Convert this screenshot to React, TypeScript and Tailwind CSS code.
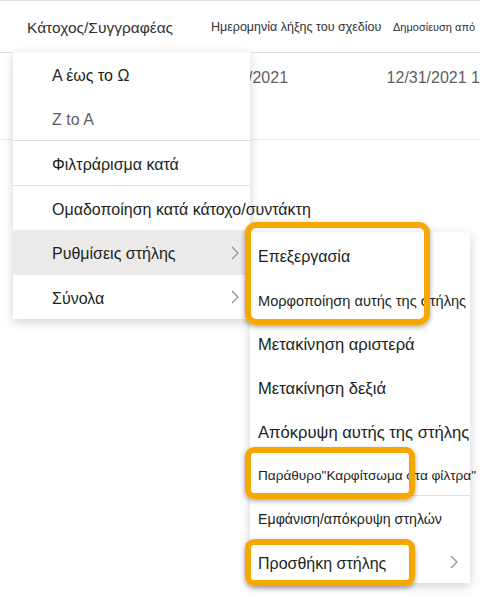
import React from 'react';

const Chevron = ({ className = '' }: { className?: string }) => (
  <svg width="8" height="14" viewBox="0 0 8 14" className={className}>
    <path d="M1 1 L7 7 L1 13" fill="none" stroke="#8a8886" strokeWidth="1.1" />
  </svg>
);

const mainItems = [
  { label: 'Α έως το Ω', cls: 'text-[#201f1e]' },
  { label: 'Z to A', cls: 'text-[#605e5c]', divider: true },
  { label: 'Φιλτράρισμα κατά', cls: 'text-[#201f1e]', divider: true },
  { label: 'Ομαδοποίηση κατά κάτοχο/συντάκτη', cls: 'text-[#201f1e]' },
  { label: 'Ρυθμίσεις στήλης', cls: 'text-[#201f1e]', sub: true, active: true },
  { label: 'Σύνολα', cls: 'text-[#201f1e]', sub: true },
];

const subItems = [
  { label: 'Επεξεργασία', h: 'h-[46px]', size: 'text-[16px]' },
  { label: 'Μορφοποίηση αυτής της στήλης', h: 'h-[44px]', size: 'text-[14.6px] pl-[3px]' },
  { label: 'Μετακίνηση αριστερά', h: 'h-[44px]', size: 'text-[16.6px]' },
  { label: 'Μετακίνηση δεξιά', h: 'h-[44px]', size: 'text-[16.6px]' },
  { label: 'Απόκρυψη αυτής της στήλης', h: 'h-[44px]', size: 'text-[16.6px]' },
  { label: 'Παράθυρο"Καρφίτσωμα στα φίλτρα"', h: 'h-[41px]', size: 'text-[13.6px] pl-[3px]', divider: true },
  { label: 'Εμφάνιση/απόκρυψη στηλών', h: 'h-[45px]', size: 'text-[14.2px]' },
  { label: 'Προσθήκη στήλης', h: 'h-[42px]', size: 'text-[16px]', sub: true },
];

export default function App() {
  return (
    <div className="relative w-[480px] h-[597px] overflow-hidden bg-white font-['Liberation_Sans',sans-serif]">
      {/* table */}
      <div className="flex flex-col border-t border-[#e1dfdd]">
        <div className="flex items-center h-[52px] pt-[2px] border-b border-[#e1dfdd] text-[#323130]">
          <span className="pl-[27px] w-[211px] text-[15.5px]">Κάτοχος/Συγγραφέας</span>
          <span className="w-[182px] text-[12.5px] whitespace-nowrap">Ημερομηνία λήξης του σχεδίου</span>
          <span className="text-[11px] whitespace-nowrap">Δημοσίευση από</span>
        </div>
        <div className="flex items-center h-[87px] border-b border-[#edebe9] text-[#605e5c] text-[16px] pb-[36px]">
          <span className="pl-[248px] w-[393px]">/2021</span>
          <span className="whitespace-nowrap">12/31/2021 1</span>
        </div>
      </div>

      {/* main menu */}
      <div className="absolute left-[13px] top-[52px] w-[237px] bg-white shadow-[0_3px_10px_rgba(0,0,0,0.18)] flex flex-col">
        {mainItems.map((it) => (
          <React.Fragment key={it.label}>
            <div
              className={`flex items-center justify-between pt-[3px] pl-[39px] pr-[11px] text-[16px] ${it.cls} ${
                it.active ? 'bg-[#edebe9] h-[45px]' : 'h-[44px]'
              }`}
            >
              <span className="whitespace-nowrap">{it.label}</span>
              {it.sub && <Chevron className="-mt-[3px]" />}
            </div>
            {it.divider && <div className="h-px bg-[#e1dfdd]" />}
          </React.Fragment>
        ))}
      </div>

      {/* sub menu */}
      <div className="absolute left-[250px] top-[232px] w-[220px] bg-white shadow-[0_3px_10px_rgba(0,0,0,0.18)] flex flex-col">
        {subItems.map((it) => (
          <React.Fragment key={it.label}>
            <div className={`flex items-center justify-between ${it.h} pt-[3px] pl-[8px] pr-[12px] text-[#201f1e] ${it.size}`}>
              <span className="whitespace-nowrap">{it.label}</span>
              {it.sub && <Chevron className="-mt-[3px]" />}
            </div>
            {it.divider && <div className="h-px bg-[#e1dfdd]" />}
          </React.Fragment>
        ))}
      </div>

      {/* highlight frames */}
      <div className="absolute left-[245px] top-[222px] w-[185px] h-[103px] rounded-[11px] border-[6px] border-[#f6a800] shadow-[0_2px_5px_rgba(0,0,0,0.35)]" />
      <div className="absolute left-[245px] top-[447px] w-[170px] h-[52px] rounded-[9px] border-[6px] border-[#f6a800] shadow-[0_2px_5px_rgba(0,0,0,0.35)]" />
      <div className="absolute left-[245px] top-[539px] w-[170px] h-[47px] rounded-[9px] border-[6px] border-[#f6a800] shadow-[0_2px_5px_rgba(0,0,0,0.35)]" />
    </div>
  );
}
